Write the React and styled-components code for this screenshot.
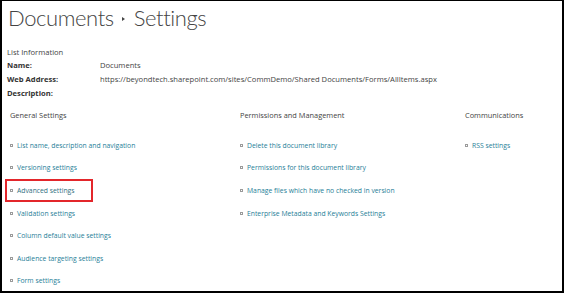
import React from "react";
import styled, { createGlobalStyle } from "styled-components";

const GlobalStyle = createGlobalStyle`
  html, body {
    margin: 0;
    padding: 0;
    background: #fff;
  }
  body {
    font-family: "Open Sans", "Noto Sans", sans-serif;
  }
`;

const Frame = styled.div`
  box-sizing: border-box;
  width: 564px;
  height: 293px;
  border: 2px solid #000;
  border-top-width: 1px;
  background: #fff;
  overflow: hidden;
  padding: 0 0 0 5px;
`;

const Title = styled.h1`
  margin: 0;
  padding: 0 0 0 1px;
  height: 33px;
  box-sizing: border-box;
  display: flex;
  align-items: center;
  font-family: Lato, "Open Sans", sans-serif;
  font-weight: 300;
  font-size: 22px;
  letter-spacing: -0.4px;
  color: #444;
`;

const Crumb = styled.span`
  width: 0;
  height: 0;
  margin: 3px 9px 0 8px;
  border-top: 2.5px solid transparent;
  border-bottom: 2.5px solid transparent;
  border-left: 3px solid #444;
`;

const Info = styled.section`
  margin-top: 11px;
  font-size: 7.6px;
  color: #444;
`;

const InfoHeading = styled.div`
  line-height: 14px;
  margin-bottom: -1px;
`;

const InfoRow = styled.div`
  display: grid;
  grid-template-columns: 93px 1fr;
  line-height: 14px;
`;

const Label = styled.span`
  font-weight: 700;
  color: #333;
`;

const Columns = styled.div`
  display: grid;
  grid-template-columns: 230px 225px 1fr;
  margin: 8px 0 0 3px;
`;

const Column = styled.div`
  display: flex;
  flex-direction: column;
`;

const Heading = styled.div`
  font-size: 7.4px;
  color: #444;
  line-height: 14px;
  margin-bottom: 12px;
`;

const Item = styled.a`
  box-sizing: border-box;
  display: flex;
  align-items: center;
  gap: 4px;
  width: 88px;
  min-width: fit-content;
  white-space: nowrap;
  height: 22.6px;
  margin-left: -5px;
  padding: 0 3px;
  border: 2px solid ${(p) => (p.$marked ? "#e3262b" : "transparent")};
  font-size: 6.8px;
  color: ${(p) => (p.$marked ? "#2f6f80" : "#1f8098")};
  text-decoration: none;
`;

const Bullet = styled.span`
  flex: none;
  box-sizing: border-box;
  width: 3px;
  height: 3px;
  border: 1px solid #9a9a9a;
`;

const general = [
  "List name, description and navigation",
  "Versioning settings",
  "Advanced settings",
  "Validation settings",
  "Column default value settings",
  "Audience targeting settings",
  "Form settings",
];

const permissions = [
  "Delete this document library",
  "Permissions for this document library",
  "Manage files which have no checked in version",
  "Enterprise Metadata and Keywords Settings",
];

const communications = ["RSS settings"];

const groups = [
  { title: "General Settings", items: general },
  { title: "Permissions and Management", items: permissions },
  { title: "Communications", items: communications },
];

export default function App() {
  return (
    <>
      <GlobalStyle />
      <Frame>
        <Title>
          Documents
          <Crumb />
          Settings
        </Title>
        <Info>
          <InfoHeading>List Information</InfoHeading>
          <InfoRow>
            <Label>Name:</Label>
            <span>Documents</span>
          </InfoRow>
          <InfoRow>
            <Label>Web Address:</Label>
            <span>
              https://beyondtech.sharepoint.com/sites/CommDemo/Shared
              Documents/Forms/AllItems.aspx
            </span>
          </InfoRow>
          <InfoRow>
            <Label>Description:</Label>
            <span />
          </InfoRow>
        </Info>
        <Columns>
          {groups.map((g) => (
            <Column key={g.title}>
              <Heading>{g.title}</Heading>
              {g.items.map((it) => (
                <Item key={it} href="#" $marked={it === "Advanced settings"}>
                  <Bullet />
                  {it}
                </Item>
              ))}
            </Column>
          ))}
        </Columns>
      </Frame>
    </>
  );
}
